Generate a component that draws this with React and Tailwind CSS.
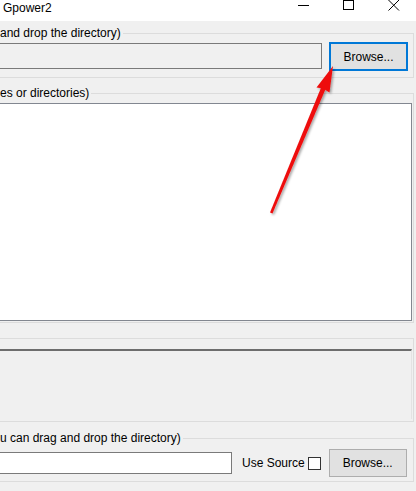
import React from 'react';

const font = { fontFamily: '"Liberation Sans", Arial, sans-serif' };

// Win10-style push button
function Button({ focused, children }) {
  return (
    <button
      className={
        focused
          ? 'h-[29px] w-[79px] shrink-0 border-2 border-[#0078d7] bg-[#e1e1e1] text-[12px] text-black'
          : 'h-[28px] w-[78px] shrink-0 border border-[#adadad] bg-[#e1e1e1] text-[12px] text-black'
      }
    >
      {children}
    </button>
  );
}

function TitleBar() {
  return (
    <div className="h-[21px] bg-white flex items-start shrink-0">
      <span className="ml-[3px] mt-[1px] text-[12px] leading-[14px] text-black">Gpower2</span>
      <div className="ml-auto flex items-start">
        {/* minimize */}
        <svg width="12" height="12" className="mr-[34px]" viewBox="0 0 12 12">
          <line x1="1" y1="5.5" x2="12" y2="5.5" stroke="#000" strokeWidth="1" />
        </svg>
        {/* maximize */}
        <svg width="12" height="12" className="mr-[33px]" viewBox="0 0 12 12">
          <rect x="0.5" y="0.5" width="10" height="9" fill="none" stroke="#000" strokeWidth="1" />
        </svg>
        {/* close */}
        <svg width="12" height="12" className="mr-[16px]" viewBox="0 0 12 12">
          <path d="M0.5 0 L11 10.5 M11 0 L0.5 10.5" stroke="#000" strokeWidth="1" />
        </svg>
      </div>
    </div>
  );
}

function Arrow() {
  return (
    <svg
      className="absolute left-0 top-0 pointer-events-none"
      width="416"
      height="491"
      viewBox="0 0 416 491"
    >
      <defs>
        <filter id="arrowShadow" x="-50%" y="-50%" width="200%" height="200%">
          <feDropShadow dx="1.5" dy="1.5" stdDeviation="1" floodColor="#000" floodOpacity="0.35" />
        </filter>
      </defs>
      <g filter="url(#arrowShadow)" fill="#ee1111">
        <polygon points="270,212.5 272.5,213.5 326,88 321.5,86.5" />
        <polygon points="333,66 316.5,87.5 323,88.5 329.5,92.5" />
      </g>
    </svg>
  );
}

export default function App() {
  return (
    <div
      className="relative w-[416px] h-[491px] overflow-hidden bg-[#f0f0f0] text-black flex flex-col"
      style={font}
    >
      <TitleBar />

      {/* source directory */}
      <fieldset className="mt-[4px] ml-[-10px] w-[424px] border border-[#dcdcdc] pr-[5px] pb-[6px]">
        <legend className="ml-[9px] pr-[2px] text-[12px] leading-[16px]">and drop the directory)</legend>
        <div className="flex items-start pt-[1px]">
          <div className="mt-[1px] h-[26px] w-[331px] border border-[#7a7a7a] bg-[#f0f0f0]" />
          <div className="ml-[7px]">
            <Button focused>Browse...</Button>
          </div>
        </div>
      </fieldset>

      {/* files list */}
      <fieldset className="mt-[7px] ml-[-10px] w-[424px] border border-[#dcdcdc] pr-[1px] pb-[1px]">
        <legend className="ml-[9px] pr-[2px] text-[12px] leading-[16px]">es or directories)</legend>
        <div className="mt-[2px] h-[218px] border border-[#828790] bg-white" />
      </fieldset>

      {/* progress / log panel */}
      <fieldset className="mt-[15px] ml-[-10px] w-[424px] border border-[#dcdcdc] pt-[10px] pr-[1px] pb-[2px]">
        <div className="h-[70px] border-t-2 border-r border-t-[#6d6d6d] border-r-[#e3e3e3] bg-[#f0f0f0]" />
      </fieldset>

      {/* output directory */}
      <fieldset className="mt-[8px] ml-[-10px] w-[424px] border border-[#dcdcdc] pr-[5px] pb-[4px]">
        <legend className="ml-[9px] pr-[2px] text-[12px] leading-[16px]">u can drag and drop the directory)</legend>
        <div className="flex items-center pt-[3px]">
          <div className="h-[22px] w-[241px] border border-[#7a7a7a] bg-white" />
          <span className="ml-[10px] text-[12px] whitespace-nowrap">Use Source</span>
          <span className="ml-[3px] h-[13px] w-[13px] shrink-0 border border-[#333333] bg-white" />
          <div className="ml-[8px]">
            <Button>Browse...</Button>
          </div>
        </div>
      </fieldset>

      <Arrow />
    </div>
  );
}
